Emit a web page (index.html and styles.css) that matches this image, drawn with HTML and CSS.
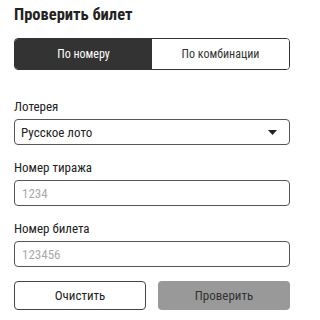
FILE: index.html
```html
<!DOCTYPE html>
<html lang="ru">
<head>
<meta charset="utf-8">
<link rel="stylesheet" href="styles.css">
</head>
<body>
<div class="page">
  <h1 class="title">Проверить билет</h1>
  <div class="toggle">
    <div class="seg seg-active">По номеру</div>
    <div class="seg">По комбинации</div>
  </div>
  <div class="field first">
    <div class="label">Лотерея</div>
    <div class="box select">
      <span class="value">Русское лото</span>
      <svg class="caret" width="9" height="5" viewBox="0 0 9 5"><path d="M0 0H9L4.5 5Z" fill="#222"/></svg>
    </div>
  </div>
  <div class="field">
    <div class="label">Номер тиража</div>
    <div class="box input"><span class="ph">1234</span></div>
  </div>
  <div class="field">
    <div class="label">Номер билета</div>
    <div class="box input"><span class="ph">123456</span></div>
  </div>
  <div class="actions">
    <div class="btn btn-clear">Очистить</div>
    <div class="btn btn-check">Проверить</div>
  </div>
</div>
</body>
</html>
```
FILE: styles.css
```css
html, body {
  margin: 0;
  padding: 0;
  background: #fff;
}
.page {
  width: 276px;
  padding: 5px 14px 0;
  font-family: "Roboto", "Noto Sans", sans-serif;
  font-stretch: 87.5%;
  color: #222;
  display: flex;
  flex-direction: column;
}
.title {
  margin: 0;
  font-size: 16.5px;
  line-height: 20px;
  font-weight: 700;
  font-stretch: 75%;
  color: #222;
}
.toggle {
  margin-top: 13px;
  height: 32px;
  display: grid;
  grid-template-columns: 1fr 1fr;
  border: 1px solid #333;
  border-radius: 4px;
  overflow: hidden;
  box-sizing: border-box;
}
.seg {
  display: flex;
  align-items: center;
  justify-content: center;
  font-size: 12px;
  color: #333;
  background: #fff;
}
.seg-active {
  background: #333;
  color: #fff;
}
.field {
  margin-top: 14px;
  display: flex;
  flex-direction: column;
  gap: 3px;
}
.field.first {
  margin-top: 28px;
}
.label {
  font-size: 13px;
  line-height: 18px;
  color: #222;
}
.box {
  box-sizing: border-box;
  height: 26px;
  border: 1px solid #555;
  border-radius: 4px;
  padding: 0 7px;
  display: flex;
  align-items: center;
  font-size: 13px;
}
.select {
  justify-content: space-between;
  padding-right: 12px;
  padding-left: 6px;
}
.value {
  color: #222;
}
.ph {
  color: #aaa;
}
.actions {
  margin-top: 14px;
  display: grid;
  grid-template-columns: 1fr 1fr;
  gap: 12px;
}
.btn {
  box-sizing: border-box;
  height: 29px;
  border-radius: 4px;
  display: flex;
  align-items: center;
  justify-content: center;
  font-size: 13px;
  color: #222;
}
.btn-clear {
  border: 1px solid #444;
  background: #fff;
}
.btn-check {
  background: #999;
  color: #333;
}
```
